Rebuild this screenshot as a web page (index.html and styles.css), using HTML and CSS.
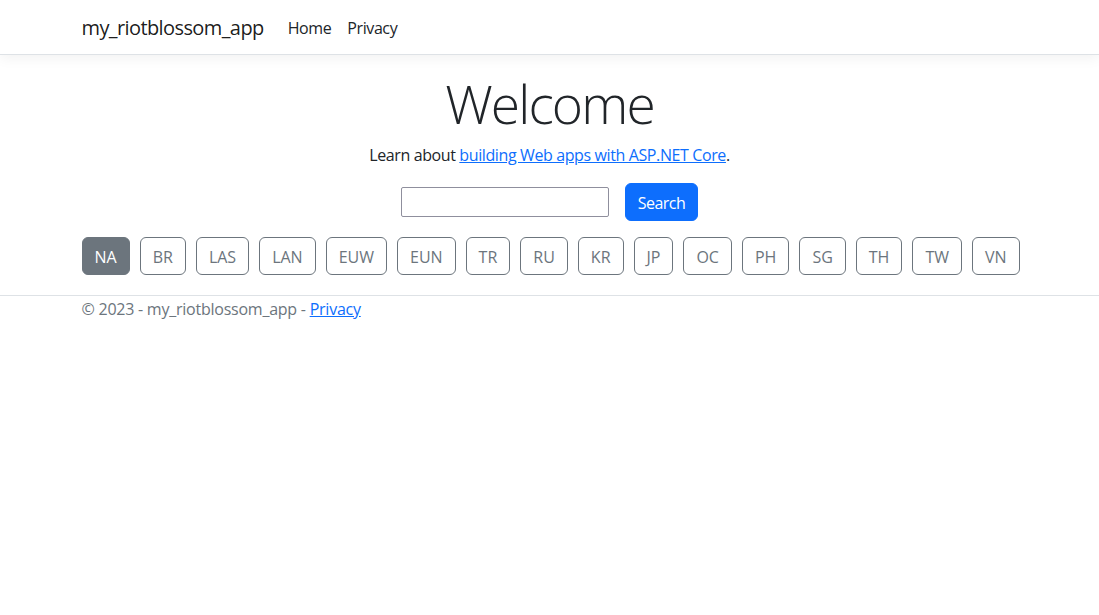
FILE: index.html
```html
<!DOCTYPE html>
<html lang="en">
<head>
<meta charset="utf-8">
<title>Home Page - my_riotblossom_app</title>
<link rel="stylesheet" href="styles.css">
</head>
<body>
<header>
  <nav class="navbar">
    <div class="container nav-inner">
      <a class="brand" href="#">my_riotblossom_app</a>
      <ul class="nav-links">
        <li><a class="nav-link" href="#">Home</a></li>
        <li><a class="nav-link" href="#">Privacy</a></li>
      </ul>
    </div>
  </nav>
</header>
<div class="container">
  <main class="main">
    <div class="intro">
      <h1 class="display">Welcome</h1>
      <p class="lead-line">Learn about <a href="#">building Web apps with ASP.NET Core</a>.</p>
      <form class="search-form">
        <input class="search-input" type="text">
        <button class="btn btn-primary" type="button">Search</button>
      </form>
    </div>
    <div class="regions">
      <button class="btn btn-region active" type="button">NA</button>
      <button class="btn btn-region" type="button">BR</button>
      <button class="btn btn-region" type="button">LAS</button>
      <button class="btn btn-region" type="button">LAN</button>
      <button class="btn btn-region" type="button">EUW</button>
      <button class="btn btn-region" type="button">EUN</button>
      <button class="btn btn-region" type="button">TR</button>
      <button class="btn btn-region" type="button">RU</button>
      <button class="btn btn-region" type="button">KR</button>
      <button class="btn btn-region" type="button">JP</button>
      <button class="btn btn-region" type="button">OC</button>
      <button class="btn btn-region" type="button">PH</button>
      <button class="btn btn-region" type="button">SG</button>
      <button class="btn btn-region" type="button">TH</button>
      <button class="btn btn-region" type="button">TW</button>
      <button class="btn btn-region" type="button">VN</button>
    </div>
  </main>
</div>
<footer class="footer">
  <div class="container footer-text">
    &copy; 2023 - my_riotblossom_app - <a href="#">Privacy</a>
  </div>
</footer>
</body>
</html>
```
FILE: styles.css
```css
* { box-sizing: border-box; }

html, body {
  margin: 0;
  padding: 0;
  background: #fff;
}

body {
  font-family: "Open Sans", "Noto Sans", "Liberation Sans", sans-serif;
  font-size: 16px;
  line-height: 1.5;
  color: #212529;
}

a { color: #0d6efd; text-decoration: underline; }

.container {
  width: 960px;
  margin: 0 auto;
  padding: 0 12px;
}

.navbar {
  background: #fff;
  border-bottom: 1px solid #dee2e6;
  box-shadow: 0 .25rem .75rem rgba(0, 0, 0, .05);
  padding: 8px 0 6px;
  margin-bottom: 16px;
}

.nav-inner {
  display: flex;
  align-items: center;
}

.brand {
  font-size: 20px;
  line-height: 30px;
  padding: 5px 0;
  margin-right: 16px;
  color: rgba(0, 0, 0, .9);
  text-decoration: none;
  white-space: nowrap;
  letter-spacing: -0.03em;
}

.nav-links {
  display: flex;
  list-style: none;
  margin: 0;
  padding: 0;
}

.nav-link {
  display: block;
  padding: 8px;
  color: #212529;
  text-decoration: none;
  letter-spacing: -0.025em;
}

.main {
  padding-bottom: 20px;
}

.intro {
  text-align: center;
}

.display {
  font-size: 53.3px;
  font-weight: 300;
  line-height: 1.2;
  margin: 0 0 7px;
  padding-top: 1px;
  letter-spacing: -0.035em;
}

.lead-line {
  margin: 0 0 16px;
  letter-spacing: -0.024em;
}

.search-form {
  display: flex;
  justify-content: center;
  align-items: center;
  gap: 16px;
  margin-bottom: 16px;
}

.search-input {
  width: 208px;
  height: 30px;
  border: 1px solid #8f8f9d;
  border-radius: 2px;
  font: inherit;
  padding: 1px 2px;
  background: #fff;
}

.btn {
  font-family: inherit;
  font-size: 16px;
  line-height: 24px;
  padding: 7px 12px 5px;
  border-radius: 6px;
  border: 1px solid transparent;
  cursor: pointer;
  white-space: nowrap;
}

.btn-primary {
  background: #0d6efd;
  border-color: #0d6efd;
  color: #fff;
  letter-spacing: -0.035em;
}

.regions {
  display: flex;
  gap: 10px;
}

.btn-region {
  background: #fff;
  color: #6c757d;
  border-color: #6c757d;
}

.btn-region.active {
  background: #6c757d;
  color: #fff;
}

.footer {
  border-top: 1px solid #dee2e6;
  color: #6c757d;
  padding-top: 1px;
}

.footer-text {
  white-space: nowrap;
  letter-spacing: -0.015em;
}
```
